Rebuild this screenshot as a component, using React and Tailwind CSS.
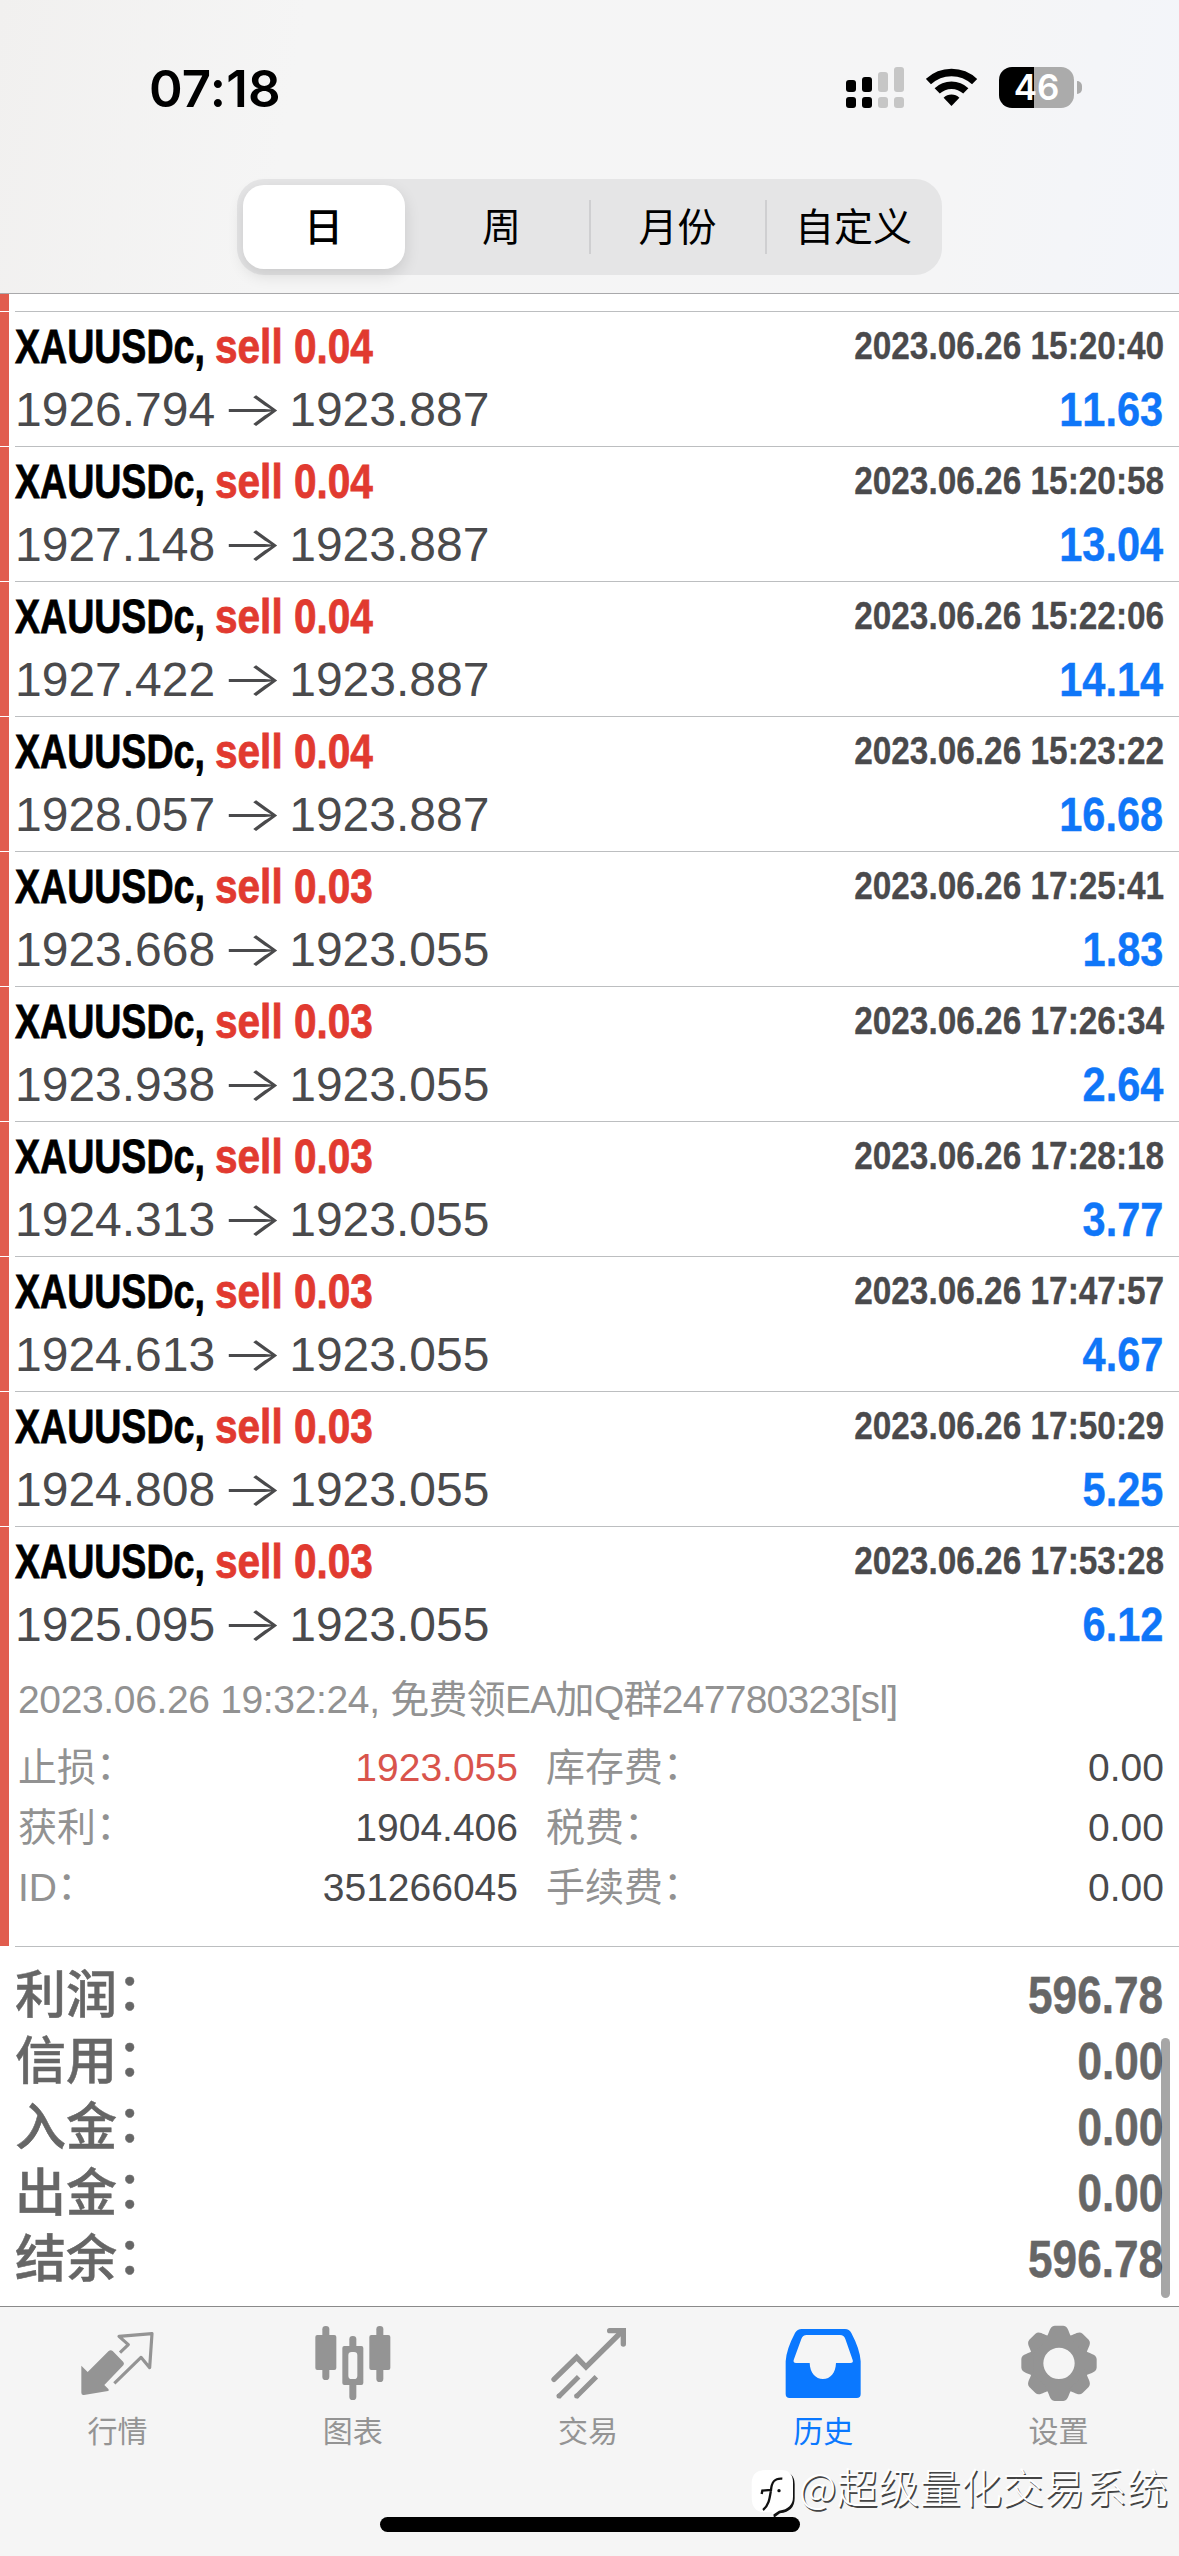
import { useState } from "react";

const deals = [
  { volume: "0.04", open: "1926.794", close: "1923.887", time: "2023.06.26 15:20:40", profit: "11.63" },
  { volume: "0.04", open: "1927.148", close: "1923.887", time: "2023.06.26 15:20:58", profit: "13.04" },
  { volume: "0.04", open: "1927.422", close: "1923.887", time: "2023.06.26 15:22:06", profit: "14.14" },
  { volume: "0.04", open: "1928.057", close: "1923.887", time: "2023.06.26 15:23:22", profit: "16.68" },
  { volume: "0.03", open: "1923.668", close: "1923.055", time: "2023.06.26 17:25:41", profit: "1.83" },
  { volume: "0.03", open: "1923.938", close: "1923.055", time: "2023.06.26 17:26:34", profit: "2.64" },
  { volume: "0.03", open: "1924.313", close: "1923.055", time: "2023.06.26 17:28:18", profit: "3.77" },
  { volume: "0.03", open: "1924.613", close: "1923.055", time: "2023.06.26 17:47:57", profit: "4.67" },
  { volume: "0.03", open: "1924.808", close: "1923.055", time: "2023.06.26 17:50:29", profit: "5.25" },
  { volume: "0.03", open: "1925.095", close: "1923.055", time: "2023.06.26 17:53:28", profit: "6.12" },
];

const details = [
  { label: "止损", value: "1923.055", hit: true, label2: "库存费", value2: "0.00" },
  { label: "获利", value: "1904.406", label2: "税费", value2: "0.00" },
  { label: "ID", value: "351266045", label2: "手续费", value2: "0.00" },
];

const totals = [
  { label: "利润", value: "596.78" },
  { label: "信用", value: "0.00" },
  { label: "入金", value: "0.00" },
  { label: "出金", value: "0.00" },
  { label: "结余", value: "596.78" },
];

const periods = ["日", "周", "月份", "自定义"];

const teeth = [0, 45, 90, 135, 180, 225, 270, 315];

function QuotesIcon() {
  return (
    <svg viewBox="0 0 252 252" className="w-[84px] h-[84px]">
      <path
        d="M16 137 L35 156 L98 93 Q104 88 110 93 L142 126 Q146 131 142 136 L85 195 L97 207 Q101 212 96 213 L24 225 Q16 226 16 218 Z"
        fill="currentColor"
      />
      <path
        d="M132 98 L157 74 L129 49 L228 41 L221 143 L195 112 L115 190"
        fill="none"
        stroke="currentColor"
        strokeWidth="9.5"
        strokeLinejoin="round"
      />
    </svg>
  );
}

function ChartIcon() {
  return (
    <svg viewBox="0 0 252 252" className="w-[84px] h-[84px]" fill="currentColor">
      <rect x="34" y="18" width="21" height="162" rx="10" />
      <rect x="13" y="45" width="63" height="105" rx="6" />
      <rect x="196" y="18" width="21" height="168" rx="10" />
      <rect x="175" y="45" width="63" height="105" rx="6" />
      <rect x="115" y="48" width="21" height="42" rx="10" />
      <rect x="115" y="185" width="21" height="55" rx="10" />
      <path
        fillRule="evenodd"
        d="M100 78 H151 Q157 78 157 84 V189 Q157 195 151 195 H100 Q94 195 94 189 V84 Q94 78 100 78 Z
           M122 96 Q112 96 112 106 V167 Q112 177 122 177 H129 Q139 177 139 167 V106 Q139 96 129 96 Z"
      />
    </svg>
  );
}

function TradeIcon() {
  return (
    <svg viewBox="0 0 252 252" className="w-[84px] h-[84px]" fill="none" stroke="currentColor">
      <g strokeWidth="16" strokeLinecap="round">
        <path d="M24 178 L92 112 L120 141 L226 36" />
        <path d="M191 32 H232 V72" />
      </g>
      <path d="M37 231 L98 170 M90 231 L151 170" strokeWidth="15" />
      <g fill="currentColor" stroke="none">
        <circle cx="39" cy="228" r="7.5" />
        <circle cx="92" cy="228" r="7.5" />
      </g>
    </svg>
  );
}

function HistoryIcon() {
  return (
    <svg viewBox="0 0 252 252" className="w-[84px] h-[84px]">
      <path
        fill="currentColor"
        fillRule="evenodd"
        d="M14 124 Q16 88 42 39 Q49 27 62 27 H192 Q205 27 211 39 Q237 88 239 124 V222 Q239 234 227 234 H26 Q14 234 14 222 Z
           M38 120 L61 57 Q65 45 77 45 H177 Q189 45 193 57 L215 120 Q218 129 208 129 H165 C164 159 148 177 126 177 C104 177 87 159 86 129 H45 Q36 129 38 120 Z"
      />
    </svg>
  );
}

function SettingsIcon() {
  return (
    <svg viewBox="0 0 252 252" className="w-[84px] h-[84px]">
      <g transform="translate(129 130)">
        <circle r="67" fill="none" stroke="currentColor" strokeWidth="40" />
        {teeth.map((deg) => (
          <path
            key={deg}
            transform={`rotate(${deg})`}
            d="M-40 -76 C-28 -88 -30 -112 -13 -113 H13 C30 -112 28 -88 40 -76 Z"
            fill="currentColor"
          />
        ))}
      </g>
    </svg>
  );
}

const tabs = [
  { name: "行情", Icon: QuotesIcon },
  { name: "图表", Icon: ChartIcon },
  { name: "交易", Icon: TradeIcon },
  { name: "历史", Icon: HistoryIcon },
  { name: "设置", Icon: SettingsIcon },
];

function StatusBar() {
  return (
    <div className="flex h-[179px] justify-between pl-[149px] pr-[97px] pt-[67px]">
      <span className="font-['Inter'] text-[51px] font-semibold leading-[43px] tracking-[0.2px]">
        07:18
      </span>
      <div className="flex items-start">
        <svg viewBox="0 0 58 42" className="mr-[22px] h-[42px] w-[58px]">
          <g fill="#000">
            <rect x="0" y="13" width="10" height="12" rx="3" />
            <rect x="16" y="10" width="10" height="15" rx="3" />
            <rect x="0" y="30" width="10" height="11" rx="3" />
            <rect x="16" y="30" width="10" height="11" rx="3" />
          </g>
          <g fill="#c6c6c6">
            <rect x="32" y="5" width="10" height="20" rx="3" />
            <rect x="48" y="0" width="10" height="25" rx="3" />
            <rect x="32" y="30" width="10" height="11" rx="3" />
            <rect x="48" y="30" width="10" height="11" rx="3" />
          </g>
        </svg>
        <svg viewBox="0 0 52 42" className="mr-[21px] h-[42px] w-[52px]">
          <g fill="none" stroke="#000" strokeWidth="7.5">
            <path d="M2.4 14.6 A33.6 33.6 0 0 1 48.6 14.6" />
            <path d="M11.2 23.9 A20.8 20.8 0 0 1 39.8 23.9" />
          </g>
          <path d="M17.6 30.7 A11.5 11.5 0 0 1 33.4 30.7 L25.5 39 Z" fill="#000" />
        </svg>
        <div className="flex h-[41px] w-[75px] items-center justify-center rounded-[13px] bg-[linear-gradient(90deg,#000_35px,#ababab_35px)] font-['Inter'] text-[35px] font-semibold text-white">
          46
        </div>
        <div className="ml-[3px] mt-[14px] h-[13px] w-[5px] rounded-r-[5px] bg-[#ababab]" />
      </div>
    </div>
  );
}

function PeriodPicker() {
  const [active, setActive] = useState(0);

  return (
    <div className="ml-[237px] flex h-[96px] w-[705px] rounded-[27px] bg-[#e5e5e6]">
      {periods.map((name, i) => (
        <button
          key={name}
          onClick={() => setActive(i)}
          className={`relative flex w-[176px] items-center justify-center pt-[2px] text-[39px] leading-[56px] ${
            i === active ? "pr-[3px] font-medium" : "pl-px"
          }`}
        >
          {i === active && (
            <span className="absolute left-[6px] top-[6px] h-[84px] w-[162px] rounded-[21px] bg-white shadow-[0_6px_16px_rgba(0,0,0,0.12)]" />
          )}
          {i > active + 1 && (
            <span className="absolute left-0 top-[21px] h-[54px] w-[2px] bg-[#cfcfd1]" />
          )}
          <span className="relative">{name}</span>
        </button>
      ))}
    </div>
  );
}

// full-width colon, lifted to the middle of the line
function Label({ text, className = "" }) {
  return (
    <span className={className}>
      {text}
      <span className="relative -top-[0.06em]">：</span>
    </span>
  );
}

function Deal({ deal, children }) {
  return (
    <div className="flex">
      <div className="mt-px w-[9px] bg-[#e15d4e]" />
      <div className="ml-[6px] flex-1 border-t border-[#bcbec0] pt-[6px] pr-[15px]">
        <div className="flex h-[56px] justify-between whitespace-nowrap font-bold">
          <div className="flex text-[48px] leading-[58px] [-webkit-text-stroke:0.8px]">
            <span className="w-[200px]">
              <span className="inline-block origin-left scale-x-[0.782] text-black">XAUUSDc,</span>
            </span>
            <span className="origin-left scale-x-[0.845] text-[#e13a30]">sell {deal.volume}</span>
          </div>
          <div className="origin-right scale-x-[0.856] text-[39px] leading-[55px] text-[#4a4a4c] [-webkit-text-stroke:0.3px]">
            {deal.time}
          </div>
        </div>
        <div className="flex h-[72px] justify-between text-[48px] leading-[72px] [font-kerning:none]">
          <div className="flex text-[#4a4a4c]">
            {deal.open}
            <span className="w-[74px] scale-x-[1.38] text-center font-['Inter'] font-light leading-[70px]">
              →
            </span>
            {deal.close}
          </div>
          <div className="mr-px origin-right scale-x-[0.865] font-bold text-[#0f76f8] [-webkit-text-stroke:0.4px]">
            {deal.profit}
          </div>
        </div>
        {children}
      </div>
    </div>
  );
}

function DealDetails() {
  return (
    <div className="h-[285px] pl-[3px] pt-[19px] text-[39px] text-[#929292]">
      <div className="leading-[40px] tracking-[-0.72px]">
        <span className="tracking-[-0.35px]">2023.06.26 19:32:24, </span>
        免费领EA加Q群247780323[sl]
      </div>
      <div className="mt-[18px]">
        {details.map((row) => (
          <div key={row.label} className="flex leading-[60px]">
            <Label text={row.label} className="w-[200px]" />
            <span className={`w-[300px] text-right ${row.hit ? "text-[#d9544c]" : "text-[#4a4a4c]"}`}>
              {row.value}
            </span>
            <Label text={row.label2} className="ml-[28px] flex-1" />
            <span className="text-[#4a4a4c]">{row.value2}</span>
          </div>
        ))}
      </div>
    </div>
  );
}

function Totals() {
  return (
    <div className="ml-[15px] flex-1 border-t border-[#bcbec0] pr-[15px] pt-[16px] text-[51px] font-bold text-[#666]">
      {totals.map((row) => (
        <div key={row.label} className="flex justify-between leading-[66px] [-webkit-text-stroke:0.5px]">
          <Label text={row.label} className="font-medium" />
          <span className="mr-px origin-right scale-x-[0.865]">{row.value}</span>
        </div>
      ))}
    </div>
  );
}

function TabBar() {
  const [active, setActive] = useState("历史");

  return (
    <div className="h-[250px] border-t border-[#8a8a8a] bg-[#f5f5f5] pt-[13px]">
      <div className="grid grid-cols-5 pr-[3px]">
        {tabs.map(({ name, Icon }) => (
          <button
            key={name}
            onClick={() => setActive(name)}
            className={`flex flex-col items-center ${
              name === active ? "text-[#0a78ff]" : "text-[#949494]"
            }`}
          >
            <Icon />
            <span className="mt-[8px] text-[30px] leading-[40px]">{name}</span>
          </button>
        ))}
      </div>
      <div className="ml-[380px] mt-[65px] h-[15px] w-[420px] rounded-full bg-black" />
    </div>
  );
}

function Watermark() {
  return (
    <div className="absolute left-[751px] top-[2460px] flex">
      <svg viewBox="0 0 144 165" className="mt-[8px] h-[55px] w-[48px]">
        <path
          d="M45 8 H90 Q128 8 128 46 V88 Q128 128 84 133 L66 146 L62 128 H40 Q6 122 6 90 V46 Q6 8 45 8 Z"
          fill="#111"
          transform="translate(3 3)"
        />
        <path
          d="M45 6 H90 Q126 6 126 44 V86 Q126 122 84 128 L66 140 L62 133 H40 Q2 132 2 88 V44 Q4 6 45 6 Z"
          fill="#fff"
        />
        <path
          d="M94 32 C70 30 62 42 60 66 L34 68 L32 78 M60 66 C56 90 54 112 36 126"
          fill="none"
          stroke="#111"
          strokeWidth="7"
        />
        <circle cx="84" cy="68" r="5" fill="#111" />
      </svg>
      <span className="whitespace-nowrap font-['Noto_Sans_CJK_SC'] text-[41px] font-light leading-[50px] tracking-[0.45px] text-white [text-shadow:1.5px_1.5px_0_#444]">
        @超级量化交易系统
      </span>
    </div>
  );
}

export default function App() {
  return (
    <div
      lang="zh-CN"
      className="relative flex h-[2556px] w-[1179px] flex-col overflow-hidden bg-white font-['Liberation_Sans','Noto_Sans_CJK_SC',sans-serif] text-black"
    >
      <header className="h-[294px] border-b border-[#a9a9ab] bg-[linear-gradient(100deg,#f1f0ef_0%,#f5f5f5_25%,#f5f5f6_80%,#f3f5fa_100%)]">
        <StatusBar />
        <PeriodPicker />
      </header>

      <div className="h-[17px] w-[9px] bg-[#e15d4e]" />
      {deals.map((deal, i) => (
        <Deal key={deal.time} deal={deal}>
          {i === deals.length - 1 && <DealDetails />}
        </Deal>
      ))}

      <Totals />
      <TabBar />

      {/* scroll indicator */}
      <div className="absolute left-[1161px] top-[2038px] h-[260px] w-[9px] rounded-full bg-black/35" />
      <Watermark />
    </div>
  );
}
